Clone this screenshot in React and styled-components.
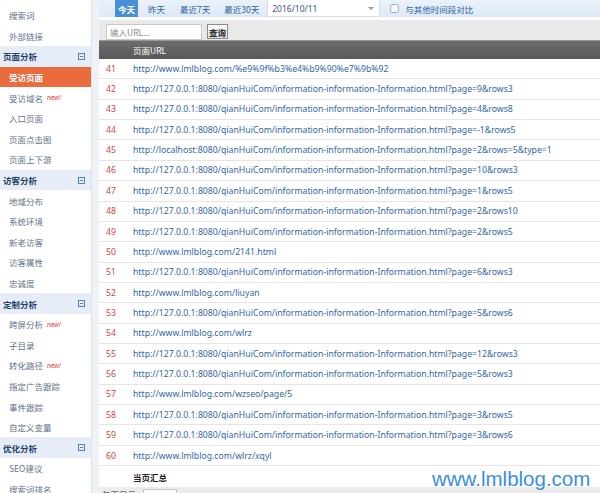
import React from "react";
import styled, { createGlobalStyle } from "styled-components";

const GlobalStyle = createGlobalStyle`
  html, body {
    margin: 0;
    padding: 0;
    background: #eef2f7;
    font-family: "Noto Sans CJK SC", "Noto Sans", sans-serif;
  }
`;

const Page = styled.div`
  position: relative;
  display: flex;
  align-items: flex-start;
  width: 600px;
  height: 493px;
  overflow: hidden;
  background: #eef2f7;
`;

const Sidebar = styled.div`
  width: 92px;
  flex: none;
  height: 493px;
  background: #fff;
  border-right: 1px solid #dde3ea;
  padding-top: 5px;
  box-sizing: border-box;
`;

const NavItem = styled.div`
  display: flex;
  align-items: center;
  height: 20.6px;
  padding-left: 9px;
  font-size: 8.5px;
  color: ${(p) => (p.$active ? "#fff" : "#5f7289")};
  font-weight: ${(p) => (p.$active ? "bold" : "normal")};
  background: ${(p) => (p.$active ? "#ea6b3d" : "transparent")};
  white-space: nowrap;
`;

const NewTag = styled.span`
  color: #e0302a;
  font-size: 6.5px;
  font-style: italic;
  margin-left: 4px;
  font-family: "Liberation Sans", sans-serif;
`;

const NavHeader = styled.div`
  display: flex;
  align-items: center;
  justify-content: space-between;
  height: 20.6px;
  padding: 0 6px 0 3px;
  background: #e6edf6;
  color: #1f3e69;
  font-weight: bold;
  font-size: 8.5px;
`;

const Fold = styled.span`
  width: 5px;
  height: 5px;
  border: 1px solid #5580b3;
  position: relative;
  &::after {
    content: "";
    position: absolute;
    left: 1px;
    right: 1px;
    top: 2px;
    height: 1px;
    background: #5580b3;
  }
`;

const Main = styled.div`
  flex: 1;
  margin-left: 7px;
  height: 493px;
  background: #fff;
  display: flex;
  flex-direction: column;
  overflow: hidden;
  & > * {
    flex: none;
  }
`;

const Toolbar = styled.div`
  display: flex;
  align-items: center;
  height: 17px;
  padding-left: 16px;
  background: linear-gradient(#eaf2fb, #dde9f7);
`;

const RangeButton = styled.div`
  height: 17px;
  display: flex;
  align-items: center;
  padding: 0 3px;
  margin-right: ${(p) => p.$gap || 0}px;
  font-size: 8.5px;
  background: ${(p) => (p.$active ? "#4a8fd6" : "transparent")};
  color: ${(p) => (p.$active ? "#fff" : "#2b5f9e")};
  font-weight: ${(p) => (p.$active ? "bold" : "normal")};
`;

const DateSelect = styled.div`
  width: 113px;
  height: 17px;
  background: #fff;
  border: 1px solid #d4dce6;
  border-top: none;
  display: flex;
  align-items: center;
  justify-content: space-between;
  padding: 0 5px 0 4px;
  box-sizing: border-box;
  font-size: 8.5px;
  color: #3d5575;
  font-family: "Noto Sans", sans-serif;
`;

const Caret = styled.span`
  width: 0;
  height: 0;
  border-left: 3px solid transparent;
  border-right: 3px solid transparent;
  border-top: 3px solid #8a97a8;
`;

const Check = styled.span`
  width: 7px;
  height: 7px;
  margin-left: 10px;
  border: 1px solid #a9b3bf;
  border-radius: 2px;
  background: #f4f6f8;
`;

const CheckLabel = styled.span`
  margin-left: 6px;
  font-size: 8.5px;
  color: #2b5f9e;
`;

const SearchBar = styled.div`
  margin-top: 3px;
  height: 20px;
  background: #e9e9e9;
  display: flex;
  align-items: center;
  padding: 3px 0 0 7px;
  box-sizing: border-box;
`;

const UrlInput = styled.div`
  width: 96px;
  height: 16px;
  box-sizing: border-box;
  background: #fff;
  border: 1px solid #c9c9c9;
  font-size: 8.5px;
  color: #8a8a8a;
  padding-left: 3px;
  display: flex;
  align-items: center;
`;

const QueryButton = styled.div`
  margin-left: 5px;
  height: 13px;
  padding: 0 1px;
  border: 1px solid #8c8c8c;
  background: linear-gradient(#fafafa, #dedede);
  font-size: 8.5px;
  font-weight: bold;
  color: #222;
  display: flex;
  align-items: center;
`;

const HeadRow = styled.div`
  height: 18px;
  display: flex;
  align-items: center;
  padding-left: 34px;
  background: linear-gradient(#6d6d6d, #595959);
  border-top: 1px solid #9a9a9a;
  color: #fff;
  font-size: 8.5px;
`;

const Row = styled.div`
  height: 20.37px;
  box-sizing: border-box;
  display: flex;
  align-items: center;
  border-bottom: 1px solid #e6e6e6;
  font-size: 8.7px;
  font-family: "Noto Sans", sans-serif;
  white-space: nowrap;
`;

const Num = styled.span`
  width: 34px;
  padding-left: 7px;
  box-sizing: border-box;
  color: #d2463c;
  flex: none;
`;

const Url = styled.span`
  color: #3266a8;
`;

const Summary = styled.div`
  height: 21px;
  display: flex;
  align-items: center;
  padding-left: 34px;
  font-size: 8.5px;
  font-weight: bold;
  color: #222;
`;

const Footer = styled.div`
  height: 10px;
  background: #ececec;
  display: flex;
  align-items: flex-start;
  padding: 1px 0 0 3px;
  font-size: 8.5px;
  line-height: 12px;
  color: #333;
  overflow: hidden;
`;

const PerPage = styled.span`
  display: inline-block;
  width: 32px;
  height: 14px;
  margin-left: 7px;
  margin-top: 1px;
  background: #fff;
  border: 1px solid #c6c6c6;
`;

const Watermark = styled.div`
  position: absolute;
  left: 432px;
  top: 469px;
  line-height: 1;
  font-family: "Liberation Sans", Arial, sans-serif;
  font-size: 20.5px;
  color: #3a8fe0;
`;

const nav = [
  { t: "搜索词" },
  { t: "外部链接" },
  { h: "页面分析" },
  { t: "受访页面", active: true },
  { t: "受访域名", isNew: true },
  { t: "入口页面" },
  { t: "页面点击图" },
  { t: "页面上下游" },
  { h: "访客分析" },
  { t: "地域分布" },
  { t: "系统环境" },
  { t: "新老访客" },
  { t: "访客属性" },
  { t: "忠诚度" },
  { h: "定制分析" },
  { t: "跨屏分析", isNew: true },
  { t: "子目录" },
  { t: "转化路径", isNew: true },
  { t: "指定广告跟踪" },
  { t: "事件跟踪" },
  { t: "自定义变量" },
  { h: "优化分析" },
  { t: "SEO建议" },
  { t: "搜索词排名" },
];

const qh = "http://127.0.0.1:8080/qianHuiCom/information-information-Information.html?";

const rows = [
  "http://www.lmlblog.com/%e9%9f%b3%e4%b9%90%e7%9b%92",
  qh + "page=9&rows3",
  qh + "page=4&rows8",
  qh + "page=-1&rows5",
  "http://localhost:8080/qianHuiCom/information-information-Information.html?page=2&rows=5&type=1",
  qh + "page=10&rows3",
  qh + "page=1&rows5",
  qh + "page=2&rows10",
  qh + "page=2&rows5",
  "http://www.lmlblog.com/2141.html",
  qh + "page=6&rows3",
  "http://www.lmlblog.com/liuyan",
  qh + "page=5&rows6",
  "http://www.lmlblog.com/wlrz",
  qh + "page=12&rows3",
  qh + "page=5&rows3",
  "http://www.lmlblog.com/wzseo/page/5",
  qh + "page=3&rows5",
  qh + "page=3&rows6",
  "http://www.lmlblog.com/wlrz/xqyl",
];

export default function App() {
  return (
    <Page>
      <GlobalStyle />
      <Sidebar>
        {nav.map((n) =>
          n.h ? (
            <NavHeader key={n.h}>
              {n.h}
              <Fold />
            </NavHeader>
          ) : (
            <NavItem key={n.t} $active={n.active}>
              {n.t}
              {n.isNew && <NewTag>new!</NewTag>}
            </NavItem>
          )
        )}
      </Sidebar>
      <Main>
        <Toolbar>
          <RangeButton $active $gap={7}>今天</RangeButton>
          <RangeButton $gap={9}>昨天</RangeButton>
          <RangeButton $gap={8}>最近7天</RangeButton>
          <RangeButton $gap={5}>最近30天</RangeButton>
          <DateSelect>
            2016/10/11
            <Caret />
          </DateSelect>
          <Check />
          <CheckLabel>与其他时间段对比</CheckLabel>
        </Toolbar>
        <SearchBar>
          <UrlInput>输入URL...</UrlInput>
          <QueryButton>查询</QueryButton>
        </SearchBar>
        <HeadRow>页面URL</HeadRow>
        {rows.map((u, i) => (
          <Row key={i}>
            <Num>{41 + i}</Num>
            <Url>{u}</Url>
          </Row>
        ))}
        <Summary>当页汇总</Summary>
        <Footer>
          每页显示
          <PerPage />
        </Footer>
      </Main>
      <Watermark>www.lmlblog.com</Watermark>
    </Page>
  );
}
